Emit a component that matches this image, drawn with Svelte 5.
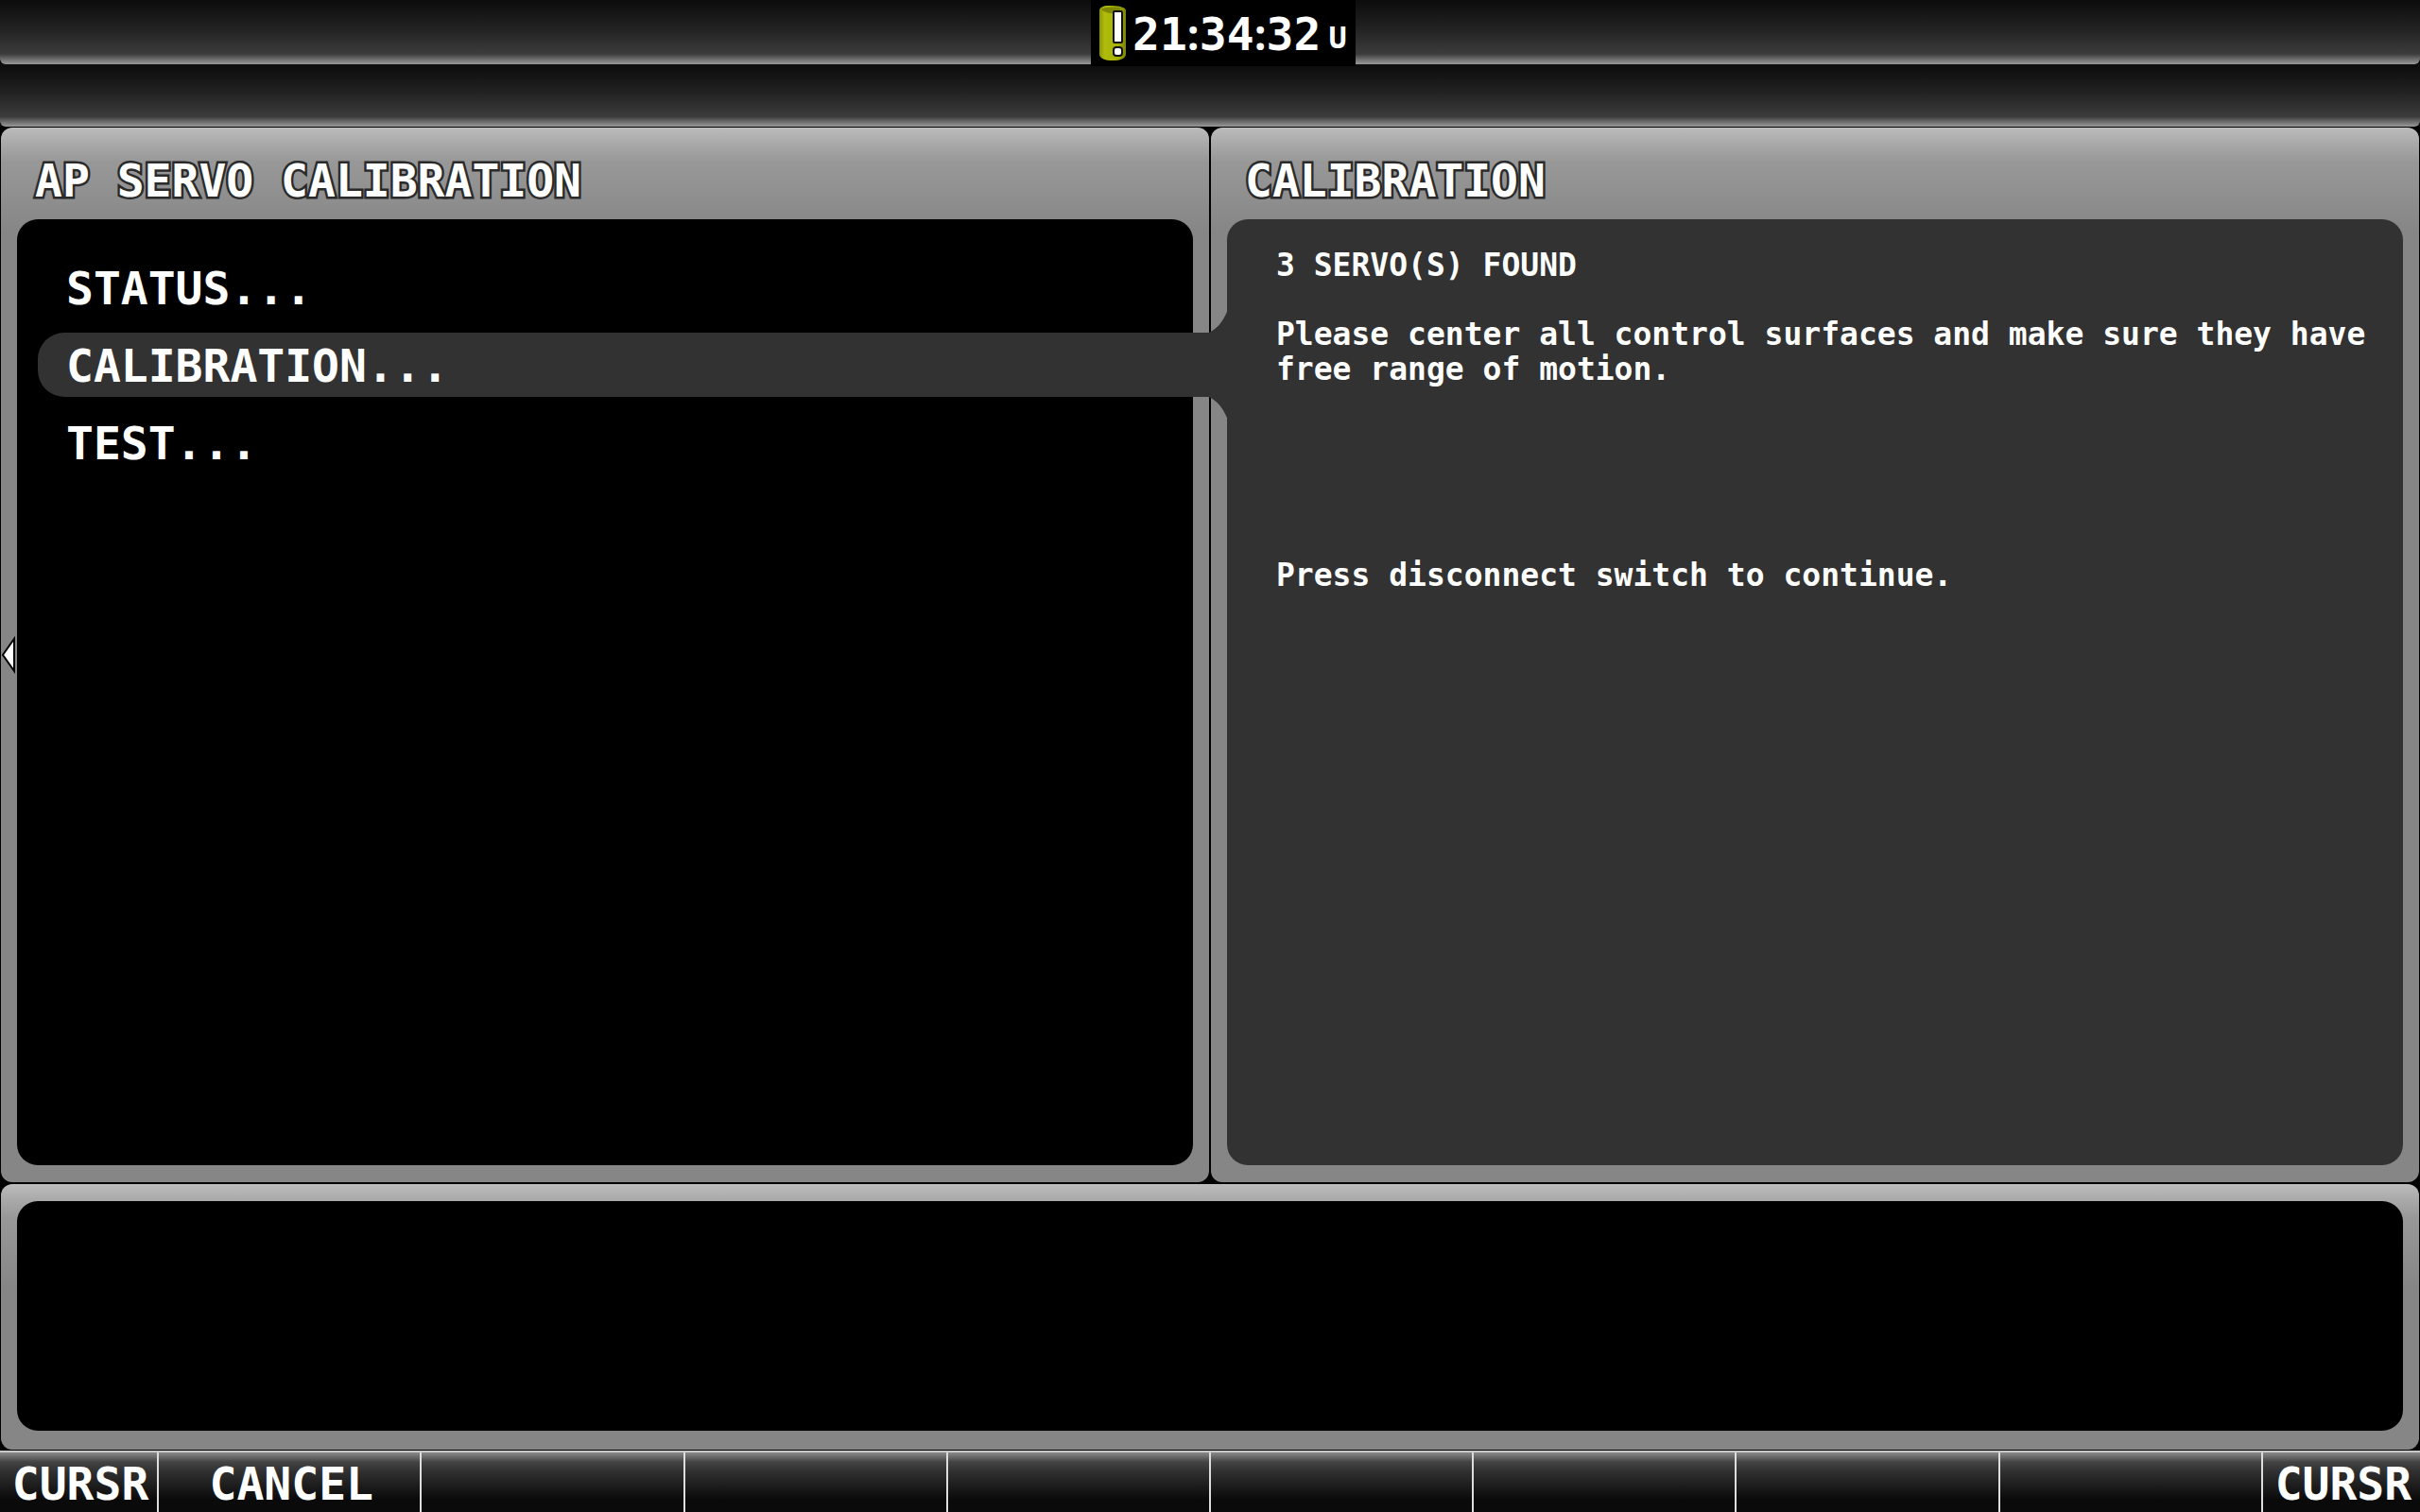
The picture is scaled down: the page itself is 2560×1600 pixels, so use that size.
<script>
  let selected = "CALIBRATION..."
  const menu = ["STATUS...", "CALIBRATION...", "TEST..."]
  const softkeys = ["CURSR", "CANCEL", "", "", "", "", "", "", "", "CURSR"]
  const time = ["21", "34", "32"]
</script>

<div class="screen">
  <header>
    <div class="bar">
      <div class="clock">
        <svg class="warn" viewBox="0 0 28 58" aria-label="Warning">
          <defs>
            <linearGradient id="can">
              <stop offset="0" stop-color="#8d9700" />
              <stop offset="0.2" stop-color="#b0bc0c" />
              <stop offset="0.7" stop-color="#a6b200" />
              <stop offset="1" stop-color="#7b8400" />
            </linearGradient>
          </defs>
          <path
            d="M0 5C0 2 4 0 10 0C18 0 28 1 28 5V52C27 56 22 58 14 58S1 56 0 52Z"
            fill="url(#can)"
          />
          <path d="M2 4C5 1 20 1 23 3C20 9 8 10 2 4Z" fill="#7f8800" />
          <rect x="15" y="6" width="9" height="33" rx="1" class="mark" />
          <rect x="15" y="44" width="9" height="9" rx="3" class="mark" />
        </svg>
        <time>
          {#each time as part, i}
            {#if i > 0}<span class="colon">:</span>{/if}<span>{part}</span>
          {/each}
        </time>
        <span class="zone">U</span>
      </div>
    </div>
    <div class="bar"></div>
  </header>

  <main>
    <section class="panel">
      <h1>AP SERVO CALIBRATION</h1>
      <nav class="well">
        {#each menu as item}
          <button
            class="item"
            class:selected={selected === item}
            on:click={() => (selected = item)}
          >
            {item}
            {#if selected === item}
              <svg class="tab" viewBox="0 0 38 112">
                <path
                  d="M0 22H16C25 19 31 11 36 0H38V112H36C31 101 25 93 16 90H0Z"
                />
              </svg>
            {/if}
          </button>
        {/each}
      </nav>
      <svg class="arrow" viewBox="0 0 16 40">
        <path d="M2 20L14 3V37Z" />
      </svg>
    </section>
    <section class="panel">
      <h1>CALIBRATION</h1>
      <div class="well detail">
        <p>3 SERVO(S) FOUND</p>
        <p>
          Please center all control surfaces and make sure they have free range
          of motion.
        </p>
        <p class="prompt">Press disconnect switch to continue.</p>
      </div>
    </section>
  </main>

  <section class="panel message">
    <div class="well"></div>
  </section>

  <footer>
    {#each softkeys as key}
      <button class="key">{key}</button>
    {/each}
  </footer>
</div>

<style>
  :global(body) {
    margin: 0;
    background: #000;
  }
  .screen {
    display: flex;
    flex-direction: column;
    min-height: 100vh;
    color: #fff;
    font-family: "DejaVu Sans Mono", monospace;
    font-size: 48px;
    font-weight: bold;
    line-height: 56px;
  }
  button {
    font: inherit;
    color: inherit;
    border: none;
    cursor: pointer;
  }
  .bar {
    display: flex;
    justify-content: center;
    height: 68px;
    border-radius: 0 0 6px 6px;
    background: linear-gradient(
      #0c0c0c,
      #222 45%,
      #3c3c3c 84%,
      #6c6c6c 92%,
      #999
    );
  }
  .bar + .bar {
    height: 65px;
    border-top: 1px solid #111;
  }
  .clock {
    display: flex;
    align-items: center;
    box-sizing: border-box;
    width: 280px;
    height: 70px;
    margin-left: 28px;
    padding-left: 9px;
    background: #000;
    z-index: 1;
  }
  .warn {
    width: 28px;
    height: 58px;
    margin-right: 7px;
  }
  .mark {
    fill: #fff;
    stroke: #111;
    stroke-width: 2;
  }
  time {
    display: flex;
    align-items: baseline;
    padding-top: 2px;
  }
  .colon {
    width: 13px;
    font-family: "Noto Sans", sans-serif;
    font-size: 44px;
    text-align: center;
  }
  .zone {
    margin: 10px 0 0 8px;
    font-size: 32px;
  }
  main {
    display: grid;
    grid-template-columns: 1fr 1fr;
    gap: 2px;
    flex: 1;
    padding: 1px 1px 2px;
  }
  .panel {
    position: relative;
    display: flex;
    flex-direction: column;
    padding: 0 17px 18px;
    border-radius: 12px;
    background: linear-gradient(#bcbcbc, #a8a8a8 18px, #989898 36px, #868686 110px);
  }
  h1 {
    margin: 0;
    padding: 28px 19px 13px;
    font-size: 48px;
    line-height: 56px;
    -webkit-text-stroke: 5px #2a2a2a;
    paint-order: stroke fill;
  }
  .well {
    flex: 1;
    border-radius: 22px;
    background: #000;
  }
  nav.well {
    display: flex;
    flex-direction: column;
    gap: 14px;
    padding: 38px 0 38px 22px;
  }
  .item {
    position: relative;
    height: 68px;
    padding: 2px 30px 0;
    border-radius: 28px 0 0 28px;
    background: none;
    text-align: left;
  }
  .item.selected {
    background: #323232;
  }
  .tab {
    position: absolute;
    left: 100%;
    top: -22px;
    width: 38px;
    height: 112px;
    fill: #323232;
    z-index: 1;
  }
  .arrow {
    position: absolute;
    left: 0;
    top: 538px;
    width: 16px;
    height: 40px;
    fill: #fff;
    stroke: #000;
    stroke-width: 2;
  }
  .detail {
    padding: 30px 20px 30px 52px;
    background: #323232;
    font-size: 33px;
    line-height: 37px;
  }
  p {
    margin: 0 0 36px;
  }
  .prompt {
    margin-top: 181px;
  }
  .message {
    min-height: 243px;
    margin: 0 1px 1px;
    padding: 18px 17px 20px;
  }
  footer {
    display: grid;
    grid-template-columns: 168fr repeat(8, 278fr) 166fr;
    height: 65px;
    border-top: 2px solid #c8c8c8;
    box-sizing: border-box;
  }
  .key {
    min-width: 0;
    padding: 2px 0 0 4px;
    border-right: 2px solid #ddd;
    background: linear-gradient(#8a8a8a, #444 10px, #303030 20px, #0a0a0a 50px);
    text-align: center;
  }
  .key:last-child {
    border-right: none;
  }
</style>
